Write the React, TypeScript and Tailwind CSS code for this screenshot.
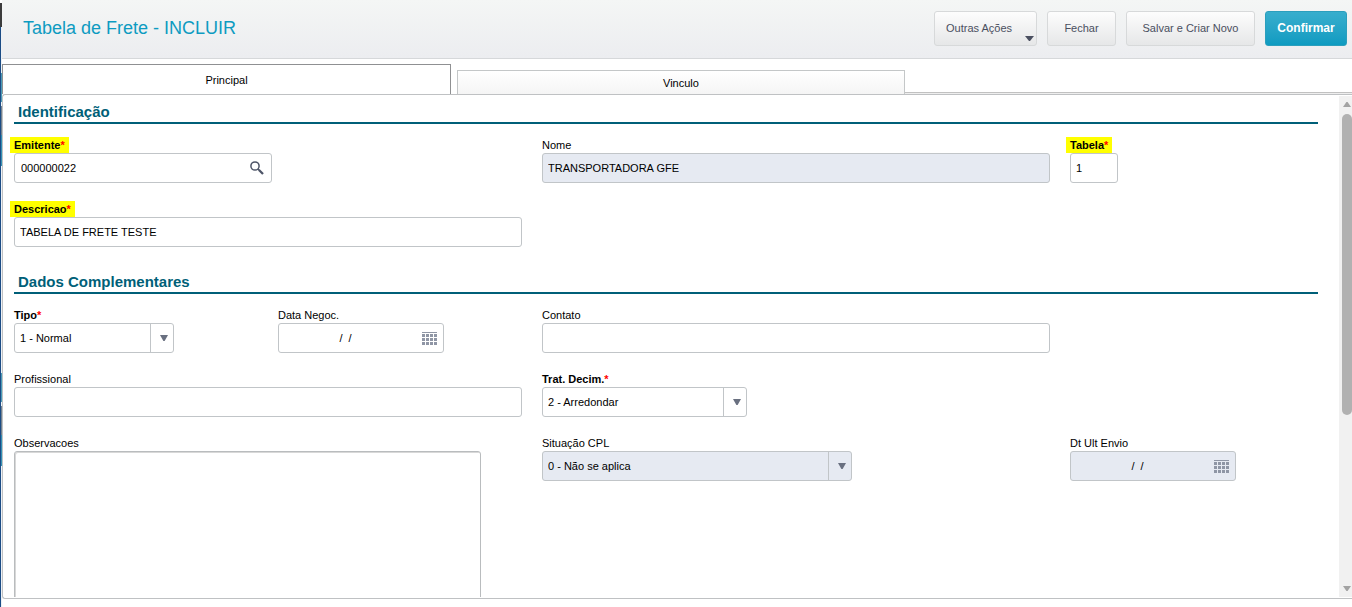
import React from "react";

type FieldProps = {
  id: string;
  label: string;
  required?: boolean;
  highlight?: boolean;
  className?: string;
  children: React.ReactNode;
};

function Field({ id, label, required, highlight, className = "", children }: FieldProps) {
  return (
    <div className={`flex min-w-0 flex-col items-start ${className}`}>
      <label
        htmlFor={id}
        className={`h-4 text-[11px] leading-4 whitespace-nowrap ${required ? "font-bold" : ""} ${
          highlight ? "-ml-1 bg-[#ffff00] px-1" : ""
        }`}
      >
        {label}
        {required && <span className="text-[#f00]">*</span>}
      </label>
      {children}
    </div>
  );
}

const box = "h-[30px] max-w-full rounded-[3px] border border-[#c1c5c8]";

function TextBox({ id, value = "", width, disabled }: { id: string; value?: string; width: string; disabled?: boolean }) {
  return (
    <input
      id={id}
      defaultValue={value}
      readOnly={disabled}
      className={`${box} ${width} px-[5px] text-[11px] outline-none ${disabled ? "bg-[#e6eaf2]" : "bg-white"}`}
    />
  );
}

function Combo({ id, value, width, disabled }: { id: string; value: string; width: string; disabled?: boolean }) {
  return (
    <div className={`${box} ${width} relative flex ${disabled ? "bg-[#e6eaf2]" : "bg-white"}`}>
      <select id={id} className="w-full appearance-none bg-transparent px-[5px] text-[11px] outline-none">
        <option>{value}</option>
      </select>
      <span className="pointer-events-none absolute inset-y-0 right-0 flex w-[23px] items-center justify-center border-l border-[#c1c5c8] pl-1">
        <svg width="8" height="6" viewBox="0 0 8 6">
          <path d="M0 0h8L4.600 6H3.400z" fill="#697080" />
        </svg>
      </span>
    </div>
  );
}

function DateBox({ id, disabled }: { id: string; disabled?: boolean }) {
  return (
    <div className={`${box} flex w-[166px] items-center ${disabled ? "bg-[#e6eaf2]" : "bg-white"}`}>
      <input
        id={id}
        defaultValue="/  /"
        readOnly={disabled}
        className="min-w-0 flex-1 bg-transparent pr-2.5 text-center text-[11px] whitespace-pre outline-none"
      />
      <button type="button" aria-label="Abrir calendário" className="mr-1.5 shrink-0">
        <svg width="15" height="13" viewBox="0 0 15 13" fill="#8f96a5" className="block" shapeRendering="crispEdges">
          <rect width="15" height="1" />
          {[2, 6, 10].map((y) => [0, 4, 8, 12].map((x) => <rect key={`${x}-${y}`} x={x} y={y} width="3" height="3" />))}
        </svg>
      </button>
    </div>
  );
}

function Section({ title, className = "", children }: { title: string; className?: string; children: React.ReactNode }) {
  return (
    <section className={className}>
      <h2 className="mb-[13px] h-[22px] border-b-2 border-[#005f78] pl-1 text-[15px] leading-5 font-bold text-[#005f78]">{title}</h2>
      <div className="grid grid-cols-5 gap-x-4 gap-y-[18px]">{children}</div>
    </section>
  );
}

const action =
  "flex h-[35px] items-center justify-center rounded-[3px] border border-[#d7d9da] bg-linear-to-b from-[#fdfdfd] to-[#e6e7e8] text-[11px] text-[#4a4f60]";

function EdgeMarks() {
  return (
    <div className="flex flex-col">
      <div className="h-[29px] bg-[#4b9cb8]" />
      <div className="mt-1 h-[29px] bg-[#75828f]" />
      <div className="h-[31px] bg-[#3391b5]" />
    </div>
  );
}

export default function App() {
  return (
    <div className="flex h-screen overflow-hidden bg-white font-['Liberation_Sans',Arial,sans-serif] text-black">
      <div aria-hidden="true" className="flex w-0.5 shrink-0 flex-col pt-[3px]">
        <div className="h-6 shrink-0 bg-[#3c3c3c]" />
        <div className="flex flex-1 bg-[#eef1f5]">
          <div className="w-px bg-[#1b4c85]" />
          <div className="flex w-px flex-col gap-[207px] pt-[46px]">
            <EdgeMarks />
            <EdgeMarks />
          </div>
        </div>
      </div>
      <div className="flex min-w-0 flex-1 flex-col">
        <header className="flex h-[59px] shrink-0 items-center justify-between border-b border-[#d6d8da] bg-linear-to-b from-[#f4f6f5] to-[#ecedf0] pr-[5px] pb-[2px] pl-[21px]">
          <h1 className="text-[18px] text-[#0d9bc1]">Tabela de Frete - INCLUIR</h1>
          <div className="flex gap-2.5">
            <button type="button" className={`${action} w-[103px] pl-[11px]`}>
              <span className="flex-1 text-left">Outras Ações</span>
              <svg width="9" height="5" viewBox="0 0 9 5" className="mr-0.5 mb-1 self-end">
                <path d="M0 0h9L5 5H4z" fill="#4a4f60" />
              </svg>
            </button>
            <button type="button" className={`${action} w-[69px]`}>Fechar</button>
            <button type="button" className={`${action} w-[129px]`}>Salvar e Criar Novo</button>
            <button
              type="button"
              className="h-[35px] w-[82px] rounded-[3px] border border-[#2b9fbd] bg-linear-to-b from-[#37aecd] to-[#0d9bc1] text-[12px] font-bold text-white"
            >
              Confirmar
            </button>
          </div>
        </header>

        <div role="tablist" className="flex h-[35px] shrink-0 items-end text-[11px]">
          <button
            type="button"
            role="tab"
            aria-selected="true"
            className="mr-1.5 h-[30px] w-[calc(100%/3-1px)] border border-b-0 border-[#8f9092] bg-white pt-0.5"
          >
            Principal
          </button>
          <button
            type="button"
            role="tab"
            aria-selected="false"
            className="h-6 w-[calc(100%/3-2px)] border border-b-0 border-[#c4c7c8] bg-linear-to-b from-white to-[#f5f5f5] pt-0.5"
          >
            Vinculo
          </button>
          <div className="h-0.5 flex-1 border-t border-[#c1c1c1] bg-[#eeeeee]" />
        </div>

        <main className="mb-2 flex min-h-0 flex-1 rounded-l-[3px] border border-r-0 border-[#bfc1c3] pb-px">
          <div className="min-w-0 flex-1 overflow-hidden pt-[7px] pr-[21px] pl-[11px]">
            <Section title="Identificação">
              <Field id="emitente" label="Emitente" required highlight className="col-span-2">
                <div className={`${box} flex w-[258px] items-center bg-white`}>
                  <input id="emitente" defaultValue="000000022" className="min-w-0 flex-1 pl-1.5 text-[11px] outline-none" />
                  <button type="button" aria-label="Pesquisar" className="mr-[7px]">
                    <svg width="14" height="14" viewBox="0 0 14 14" fill="none" stroke="#4d5467" className="block">
                      <circle cx="5" cy="5" r="4.100" strokeWidth="1.500" />
                      <path d="M8 8l1.500 1.500" strokeWidth="1.600" />
                      <path d="M9 9l4 4" strokeWidth="2.300" />
                    </svg>
                  </button>
                </div>
              </Field>
              <Field id="nome" label="Nome" className="col-span-2">
                <TextBox id="nome" value="TRANSPORTADORA GFE" width="w-[508px]" disabled />
              </Field>
              <Field id="tabela" label="Tabela" required highlight>
                <TextBox id="tabela" value="1" width="w-12" />
              </Field>
              <Field id="descricao" label="Descricao" required highlight className="col-span-2">
                <TextBox id="descricao" value="TABELA DE FRETE TESTE" width="w-[508px]" />
              </Field>
            </Section>

            <Section title="Dados Complementares" className="mt-[25px]">
              <Field id="tipo" label="Tipo" required>
                <Combo id="tipo" value="1 - Normal" width="w-40" />
              </Field>
              <Field id="data" label="Data Negoc.">
                <DateBox id="data" />
              </Field>
              <Field id="contato" label="Contato" className="col-span-2">
                <TextBox id="contato" width="w-[508px]" />
              </Field>
              <Field id="profissional" label="Profissional" className="col-span-2 col-start-1">
                <TextBox id="profissional" width="w-[508px]" />
              </Field>
              <Field id="decimais" label="Trat. Decim." required className="col-span-2">
                <Combo id="decimais" value="2 - Arredondar" width="w-[205px]" />
              </Field>
              <Field id="observacoes" label="Observacoes" className="col-span-2 col-start-1">
                <textarea
                  id="observacoes"
                  className="h-[200px] w-[467px] max-w-full resize-none rounded-[3px] border border-[#b9bcbe] p-1 text-[11px] shadow-[inset_1px_1px_0_#d8d8d8] outline-none"
                />
              </Field>
              <Field id="situacao" label="Situação CPL" className="col-span-2">
                <Combo id="situacao" value="0 - Não se aplica" width="w-[310px]" disabled />
              </Field>
              <Field id="envio" label="Dt Ult Envio">
                <DateBox id="envio" disabled />
              </Field>
            </Section>
          </div>
          <div aria-hidden="true" className="mt-px flex w-[13px] shrink-0 flex-col items-end bg-[#f1f1f1]">
            <svg width="13" height="18" viewBox="0 0 13 18">
              <path d="M4 11h8L8.600 6H7.400z" fill="#a3a3a3" />
            </svg>
            <div className="h-3/5 w-2.5 rounded-[5px] bg-[#b1b1b1]" />
            <svg width="13" height="18" viewBox="0 0 13 18" className="mt-auto">
              <path d="M4 7h8l-3.400 5H7.400z" fill="#a3a3a3" />
            </svg>
          </div>
        </main>
      </div>
    </div>
  );
}
